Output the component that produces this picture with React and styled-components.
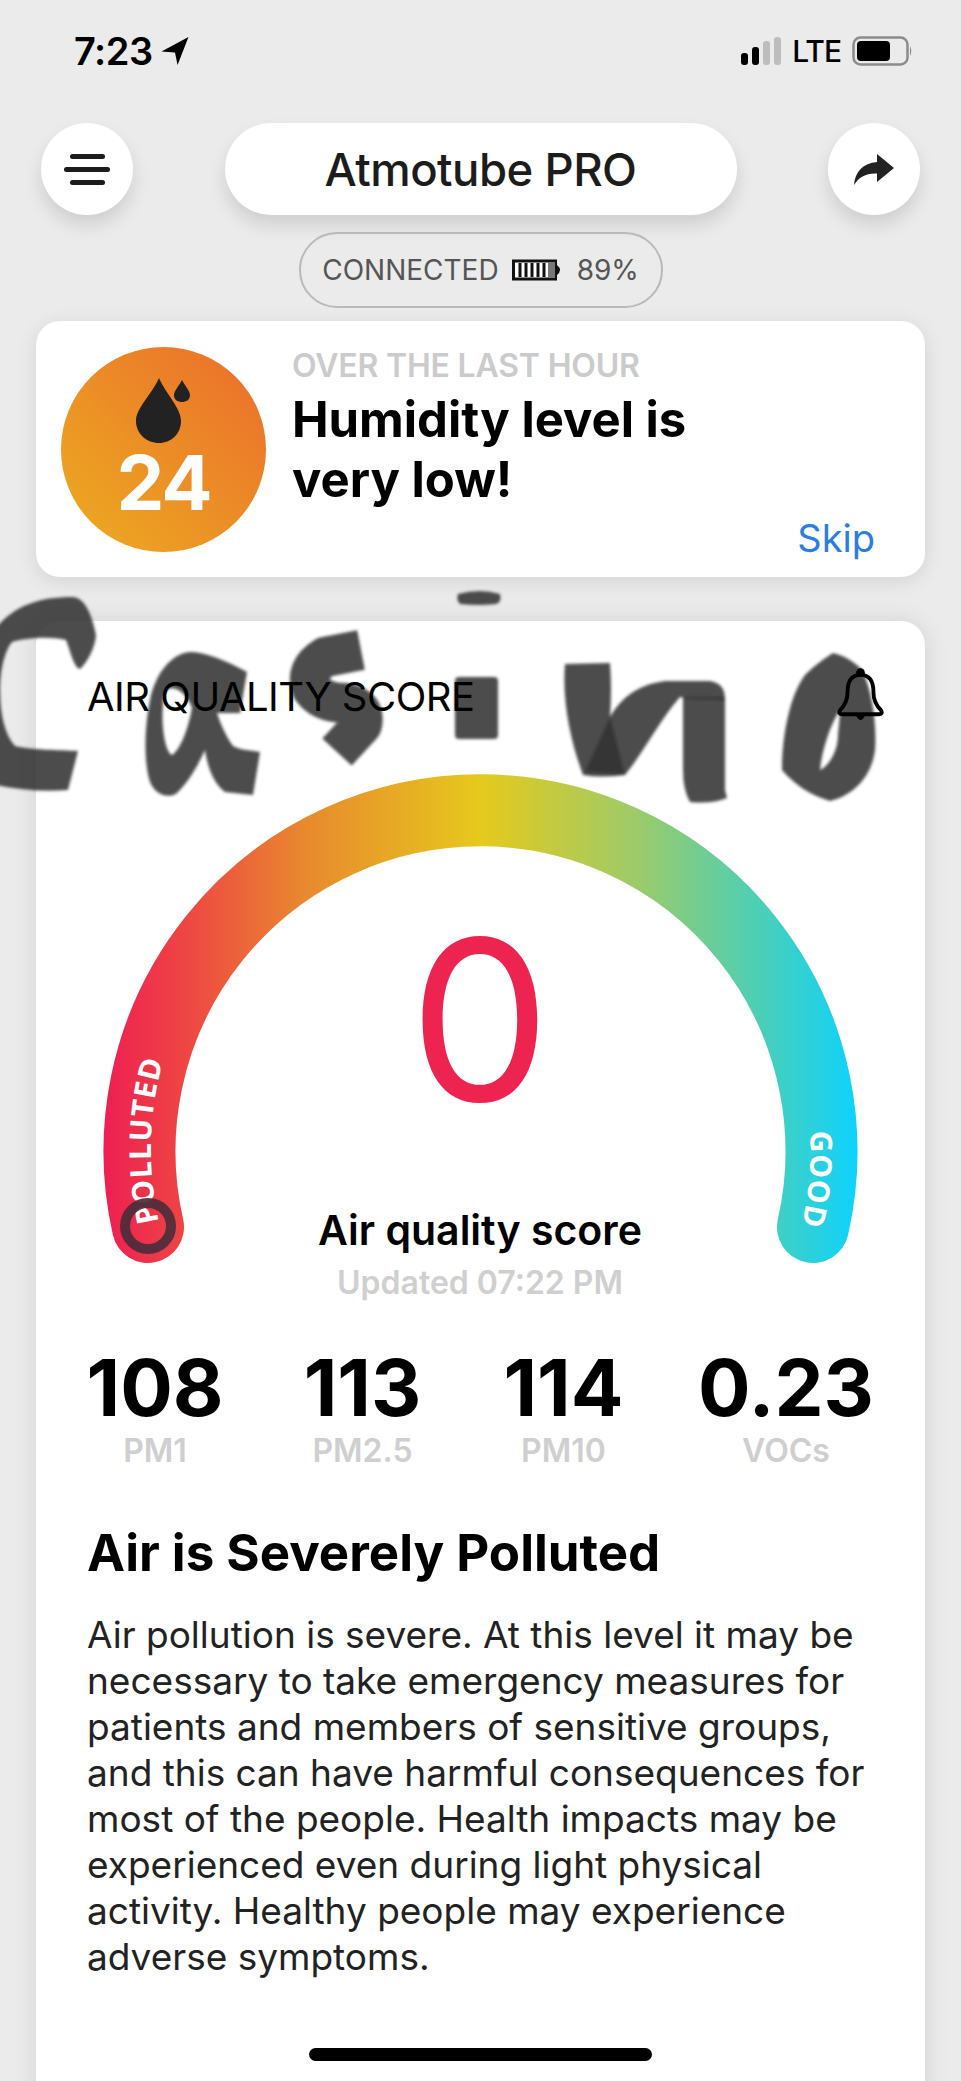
import styled, { createGlobalStyle } from 'styled-components';

const GlobalStyle = createGlobalStyle`
  html, body {
    margin: 0;
    padding: 0;
    background: #ebebeb;
  }
`;

const stats = [
  { value: '108', label: 'PM1' },
  { value: '113', label: 'PM2.5' },
  { value: '114', label: 'PM10' },
  { value: '0.23', label: 'VOCs' },
];

const App = () => (
  <Page>
    <GlobalStyle />

    <StatusBar>
      <Time>
        7:23
        <svg width="29" height="28" viewBox="0 0 27 27">
          <path d="M26 0 L0 14 L13 15 L15.5 27 Z" fill="#000" />
        </svg>
      </Time>
      <StatusRight>
        <Signal>
          <Bar $h={12} $on />
          <Bar $h={18} $on />
          <Bar $h={24} />
          <Bar $h={28} />
        </Signal>
        <Lte>LTE</Lte>
        <svg width="61" height="30" viewBox="0 0 61 30">
          <rect x="1.5" y="1.5" width="54" height="27" rx="7" fill="none" stroke="#8c8c8c" strokeWidth="2.5" />
          <rect x="5" y="5" width="33" height="20" rx="4" fill="#000" />
          <path d="M58 10 Q60.5 15 58 20 Z" fill="#8c8c8c" />
        </svg>
      </StatusRight>
    </StatusBar>

    <Header>
      <RoundButton>
        <Burger>
          <BurgerLine $w={35} />
          <BurgerLine $w={46} />
          <BurgerLine $w={35} />
        </Burger>
      </RoundButton>
      <TitlePill>Atmotube PRO</TitlePill>
      <RoundButton>
        <svg width="40" height="31" viewBox="0 0 40 31">
          <path d="M23 0 L40 14 L23 28 L23 19.5 C12 19 5 23 0 31 C1 18 9 9 23 8 Z" fill="#222" />
        </svg>
      </RoundButton>
    </Header>

    <ConnectedRow>
      <ConnectedPill>
        CONNECTED
        <svg width="52" height="22" viewBox="0 0 52 22">
          <rect x="1.5" y="2" width="42" height="18" fill="#fff" stroke="#111" strokeWidth="3" />
          <path d="M8 4v14M14 4v14M20 4v14M26 4v14M32 4v14" stroke="#111" strokeWidth="3" />
          <rect x="36" y="3" width="7" height="16" fill="#777" />
          <path d="M45 6 Q51 11 45 16 Z" fill="#111" />
        </svg>
        89%
      </ConnectedPill>
    </ConnectedRow>

    <NoticeCard>
      <HumidityBadge>
        <svg width="56" height="68" viewBox="0 0 56 68">
          <path d="M23 2 C30 18 45 32 45 45 C45 58 35 67 23 67 C11 67 0 58 0 45 C0 32 16 18 23 2 Z" fill="#222" />
          <path d="M46 4 C49 10 54 15 54 19 C54 24 50 26 46 26 C42 26 38 24 38 19 C38 15 43 10 46 4 Z" fill="#222" />
        </svg>
        <BadgeValue>24</BadgeValue>
      </HumidityBadge>
      <NoticeText>
        <NoticeEyebrow>OVER THE LAST HOUR</NoticeEyebrow>
        <NoticeTitle>Humidity level is<br />very low!</NoticeTitle>
        <SkipLink>Skip</SkipLink>
      </NoticeText>
    </NoticeCard>

    <ScoreCard>
      <ScoreHead>
        <ScoreHeadLabel>AIR QUALITY SCORE</ScoreHeadLabel>
        <svg width="47" height="58" viewBox="0 0 49 58">
          <path
            d="M24.500 7 C14 7 11 15 11 25 C11 34 8 39 3 44 Q1 48 5 48 H44 Q48 48 46 44 C41 39 38 34 38 25 C38 15 35 7 24.500 7 Z"
            fill="none"
            stroke="#000"
            strokeWidth="4"
          />
          <circle cx="24.500" cy="4.500" r="4.500" fill="#000" />
          <path d="M19 48 Q24.500 60 30 48 Z" fill="#000" />
        </svg>
      </ScoreHead>

      <Gauge>
        <GaugeArt viewBox="36 621 889 660" width="889" height="660">
          <defs>
            <linearGradient id="arc" gradientUnits="userSpaceOnUse" x1="104" y1="0" x2="857" y2="0">
              <stop offset="0" stopColor="#ee1f52" />
              <stop offset="0.12" stopColor="#ee4a42" />
              <stop offset="0.27" stopColor="#e88a2e" />
              <stop offset="0.5" stopColor="#e6c91c" />
              <stop offset="0.71" stopColor="#9ccb6b" />
              <stop offset="0.87" stopColor="#4bcfb6" />
              <stop offset="1" stopColor="#0fd2fd" />
            </linearGradient>
            <path id="leftLabel" d="M159 1222 A330 330 0 0 1 167 1048" fill="none" />
            <path id="rightLabel" d="M810 1131 A330 330 0 0 1 801 1228" fill="none" />
          </defs>
          <path
            d="M148 1227 A341 341 0 1 1 813 1227"
            fill="none"
            stroke="url(#arc)"
            strokeWidth="72"
            strokeLinecap="round"
          />
          <ArcLabel>
            <textPath href="#leftLabel">POLLUTED</textPath>
          </ArcLabel>
          <ArcLabel>
            <textPath href="#rightLabel">GOOD</textPath>
          </ArcLabel>
          <circle cx="148" cy="1226" r="23" fill="none" stroke="#4d2c3a" strokeOpacity="0.92" strokeWidth="10" />
        </GaugeArt>
        <GaugeCenter>
          <ScoreValue>0</ScoreValue>
          <ScoreCaption>Air quality score</ScoreCaption>
          <ScoreUpdated>Updated 07:22 PM</ScoreUpdated>
        </GaugeCenter>
      </Gauge>

      <StatsRow>
        {stats.map((s) => (
          <Stat key={s.label}>
            <StatValue>{s.value}</StatValue>
            <StatLabel>{s.label}</StatLabel>
          </Stat>
        ))}
      </StatsRow>

      <Heading>Air is Severely Polluted</Heading>
      <Body>
        Air pollution is severe. At this level it may be<br />
        necessary to take emergency measures for<br />
        patients and members of sensitive groups,<br />
        and this can have harmful consequences for<br />
        most of the people. Health impacts may be<br />
        experienced even during light physical<br />
        activity. Healthy people may experience<br />
        adverse symptoms.
      </Body>
    </ScoreCard>

    {/* marker scrawl drawn over the screenshot */}
    <Scrawl viewBox="0 0 961 2081" width="961" height="2081">
      <defs>
        <filter id="soft" x="-10%" y="-10%" width="120%" height="120%">
          <feGaussianBlur stdDeviation="1.8" />
        </filter>
      </defs>
      <g filter="url(#soft)">
        <Ink d="M458 594 Q480 588 500 594 Q502 602 496 604 Q478 606 460 604 Q456 600 458 594 Z" />
        {/* C */}
        <Ink d="M-4 628 C15 605 40 597 72 597 C85 597 92 615 96 635 C95 650 85 665 80 669 C74 668 70 650 66 640 C50 636 25 638 12 642 C5 650 0 670 0 690 C0 715 5 735 15 746 C30 750 60 750 78 751 L68 790 C45 792 20 790 -4 785 Z" />
        {/* a */}
        <Ink
          fillRule="evenodd"
          d="M247 672 C225 660 205 652 190 652 C170 654 155 675 150 700 C145 725 143 760 150 782 C155 795 170 800 178 792 C190 780 198 765 205 750 C208 770 215 785 225 792 L253 795 L260 752 C248 750 240 750 233 746 C225 735 220 722 217 713 L240 713 Z M167 690 C175 684 188 695 192 708 C188 730 180 750 172 755 C165 752 161 725 163 705 C163 698 165 692 167 690 Z"
        />
        {/* s */}
        <Stroke d="M361 650 L325 657 Q304 670 312 689 Q322 703 345 703 Q366 706 362 725 L337 752" strokeWidth="40" />
        {/* i */}
        <Ink d="M459 677 H494 Q498 677 498 681 V735 Q498 739 494 739 H459 Q455 739 455 735 V681 Q455 677 459 677 Z" />
        {/* n */}
        <Ink d="M565 664 L610 663 Q612 690 610 717 L625 775 Q600 778 583 775 C570 740 562 700 565 664 Z" />
        <Ink d="M610 717 C620 700 635 685 665 681 L710 681 C722 683 725 690 725 700 L690 699 L680 697 C660 720 645 750 625 775 L585 772 Z" />
        <Ink d="M683 697 L725 697 L725 790 L727 798 Q712 804 690 802 Q683 790 683 770 Z" />
        {/* o */}
        <Ink
          fillRule="evenodd"
          d="M833 653 C845 656 855 662 862 670 C872 690 877 725 875 750 C872 775 855 795 830 801 C810 795 795 785 782 770 C782 735 790 695 805 675 C815 665 825 658 833 653 Z M840 710 C830 725 822 750 820 770 C830 765 838 750 838 735 C839 725 840 715 840 710 Z"
        />
      </g>
    </Scrawl>

    <HomeIndicator />
  </Page>
);

export default App;

const sans = `Inter, "Liberation Sans", sans-serif`;

const Page = styled.div`
  position: relative;
  width: 961px;
  height: 2081px;
  overflow: hidden;
  background: #ebebeb;
  font-family: ${sans};
  color: #000;
`;

const StatusBar = styled.div`
  height: 123px;
  box-sizing: border-box;
  padding: 34px 48px 0 74px;
  display: flex;
  justify-content: space-between;
  align-items: flex-start;
`;

const Time = styled.div`
  display: flex;
  align-items: center;
  gap: 8px;
  height: 34px;
  font-size: 38px;
  font-weight: 600;
  letter-spacing: -0.5px;
`;

const StatusRight = styled.div`
  display: flex;
  align-items: center;
  gap: 11px;
  height: 34px;
`;

const Signal = styled.div`
  display: flex;
  align-items: flex-end;
  gap: 4px;
  height: 28px;
`;

const Bar = styled.div`
  width: 7px;
  height: ${(p) => p.$h}px;
  border-radius: 3px;
  background: ${(p) => (p.$on ? '#000' : '#bdbdbd')};
`;

const Lte = styled.div`
  font-size: 30px;
  line-height: 32px;
  font-weight: 500;
  letter-spacing: -1px;
`;

const Header = styled.div`
  display: flex;
  justify-content: space-between;
  padding: 0 41px;
`;

const RoundButton = styled.div`
  width: 92px;
  height: 92px;
  border-radius: 50%;
  background: #fff;
  box-shadow: 0 10px 18px rgba(0, 0, 0, 0.12);
  display: flex;
  align-items: center;
  justify-content: center;
`;

const Burger = styled.div`
  display: flex;
  flex-direction: column;
  align-items: center;
  gap: 8px;
`;

const BurgerLine = styled.div`
  width: ${(p) => p.$w}px;
  height: 5px;
  border-radius: 3px;
  background: #1c1c1c;
`;

const TitlePill = styled.div`
  width: 512px;
  height: 92px;
  border-radius: 46px;
  background: #fff;
  box-shadow: 0 10px 18px rgba(0, 0, 0, 0.12);
  display: flex;
  align-items: center;
  justify-content: center;
  font-size: 45.5px;
  font-weight: 500;
  letter-spacing: -0.5px;
  color: #1c1c1c;
`;

const ConnectedRow = styled.div`
  display: flex;
  justify-content: center;
  margin-top: 17px;
`;

const ConnectedPill = styled.div`
  width: 364px;
  height: 76px;
  box-sizing: border-box;
  border: 2px solid #b9b9b9;
  border-radius: 38px;
  display: flex;
  align-items: center;
  justify-content: center;
  gap: 13px;
  font-size: 28px;
  color: #555;
`;

const NoticeCard = styled.div`
  margin: 13px 36px 0;
  height: 256px;
  box-sizing: border-box;
  padding: 26px 50px 0 25px;
  border-radius: 24px;
  background: #fff;
  box-shadow: 0 4px 20px rgba(0, 0, 0, 0.1);
  display: flex;
  gap: 27px;
`;

const HumidityBadge = styled.div`
  flex: none;
  width: 205px;
  height: 205px;
  box-sizing: border-box;
  padding-top: 29px;
  border-radius: 50%;
  background: linear-gradient(45deg, #ebad21, #ec6c2c);
  display: flex;
  flex-direction: column;
  align-items: center;
`;

const BadgeValue = styled.div`
  font-size: 76px;
  line-height: 76px;
  font-weight: 700;
  letter-spacing: -2px;
  color: #fff;
`;

const NoticeText = styled.div`
  flex: 1;
  display: flex;
  flex-direction: column;
  margin-left: -1px;
`;

const NoticeEyebrow = styled.div`
  margin-top: 1px;
  font-size: 32px;
  line-height: 36px;
  font-weight: 600;
  letter-spacing: -0.2px;
  color: #cbcbcb;
`;

const NoticeTitle = styled.div`
  margin-top: 6px;
  font-size: 49px;
  line-height: 60px;
  font-weight: 700;
`;

const SkipLink = styled.div`
  align-self: flex-end;
  margin-top: 4px;
  font-size: 38px;
  line-height: 48px;
  color: #2a7de1;
`;

const ScoreCard = styled.div`
  margin: 44px 36px 0;
  height: 1500px;
  box-sizing: border-box;
  padding: 45px 52px 0 51px;
  border-radius: 24px;
  background: #fff;
  box-shadow: 0 0 24px rgba(0, 0, 0, 0.1);
`;

const ScoreHead = styled.div`
  position: relative;
  z-index: 2;
  display: flex;
  justify-content: space-between;
  align-items: center;
  height: 60px;
  margin-right: -11px;
`;

const ScoreHeadLabel = styled.div`
  font-size: 40px;
  letter-spacing: -0.5px;
`;

const Gauge = styled.div`
  position: relative;
`;

const GaugeArt = styled.svg`
  position: absolute;
  left: -51px;
  top: -105px;
`;

const ArcLabel = styled.text`
  font-family: "Open Sans", sans-serif;
  font-size: 30px;
  font-weight: 700;
  fill: #fff;
  letter-spacing: 1px;
`;

const GaugeCenter = styled.div`
  position: relative;
  display: flex;
  flex-direction: column;
  align-items: center;
  padding-top: 174px;
`;

const ScoreValue = styled.div`
  font-size: 224px;
  line-height: 240px;
  font-weight: 400;
  color: #ee2450;
`;

const ScoreCaption = styled.div`
  margin-top: 65px;
  font-size: 41px;
  line-height: 50px;
  font-weight: 600;
`;

const ScoreUpdated = styled.div`
  margin-top: 10px;
  font-size: 32px;
  line-height: 36px;
  font-weight: 600;
  color: #cfcfcf;
`;

const StatsRow = styled.div`
  display: grid;
  grid-template-columns: 136px 121px 123px 164px;
  column-gap: 79px;
  margin-top: 47px;
`;

const Stat = styled.div`
  display: flex;
  flex-direction: column;
  align-items: center;
`;

const StatValue = styled.div`
  font-size: 78px;
  line-height: 80px;
  font-weight: 700;
`;

const StatLabel = styled.div`
  margin-top: 5px;
  font-size: 32px;
  line-height: 36px;
  font-weight: 600;
  color: #cfcfcf;
`;

const Heading = styled.div`
  margin-top: 54px;
  font-size: 51px;
  line-height: 60px;
  font-weight: 700;
`;

const Body = styled.div`
  margin-top: 29px;
  font-size: 37px;
  line-height: 46px;
  color: #222;
`;

const Scrawl = styled.svg`
  position: absolute;
  z-index: 1;
  left: 0;
  top: 0;
  pointer-events: none;
`;

const Ink = styled.path`
  fill: #333;
  fill-opacity: 0.87;
`;

const Stroke = styled.path`
  fill: none;
  stroke: #333;
  stroke-opacity: 0.87;
  stroke-linejoin: round;
`;

const HomeIndicator = styled.div`
  position: absolute;
  z-index: 2;
  left: 309px;
  top: 2048px;
  width: 343px;
  height: 13px;
  border-radius: 7px;
  background: #000;
`;
